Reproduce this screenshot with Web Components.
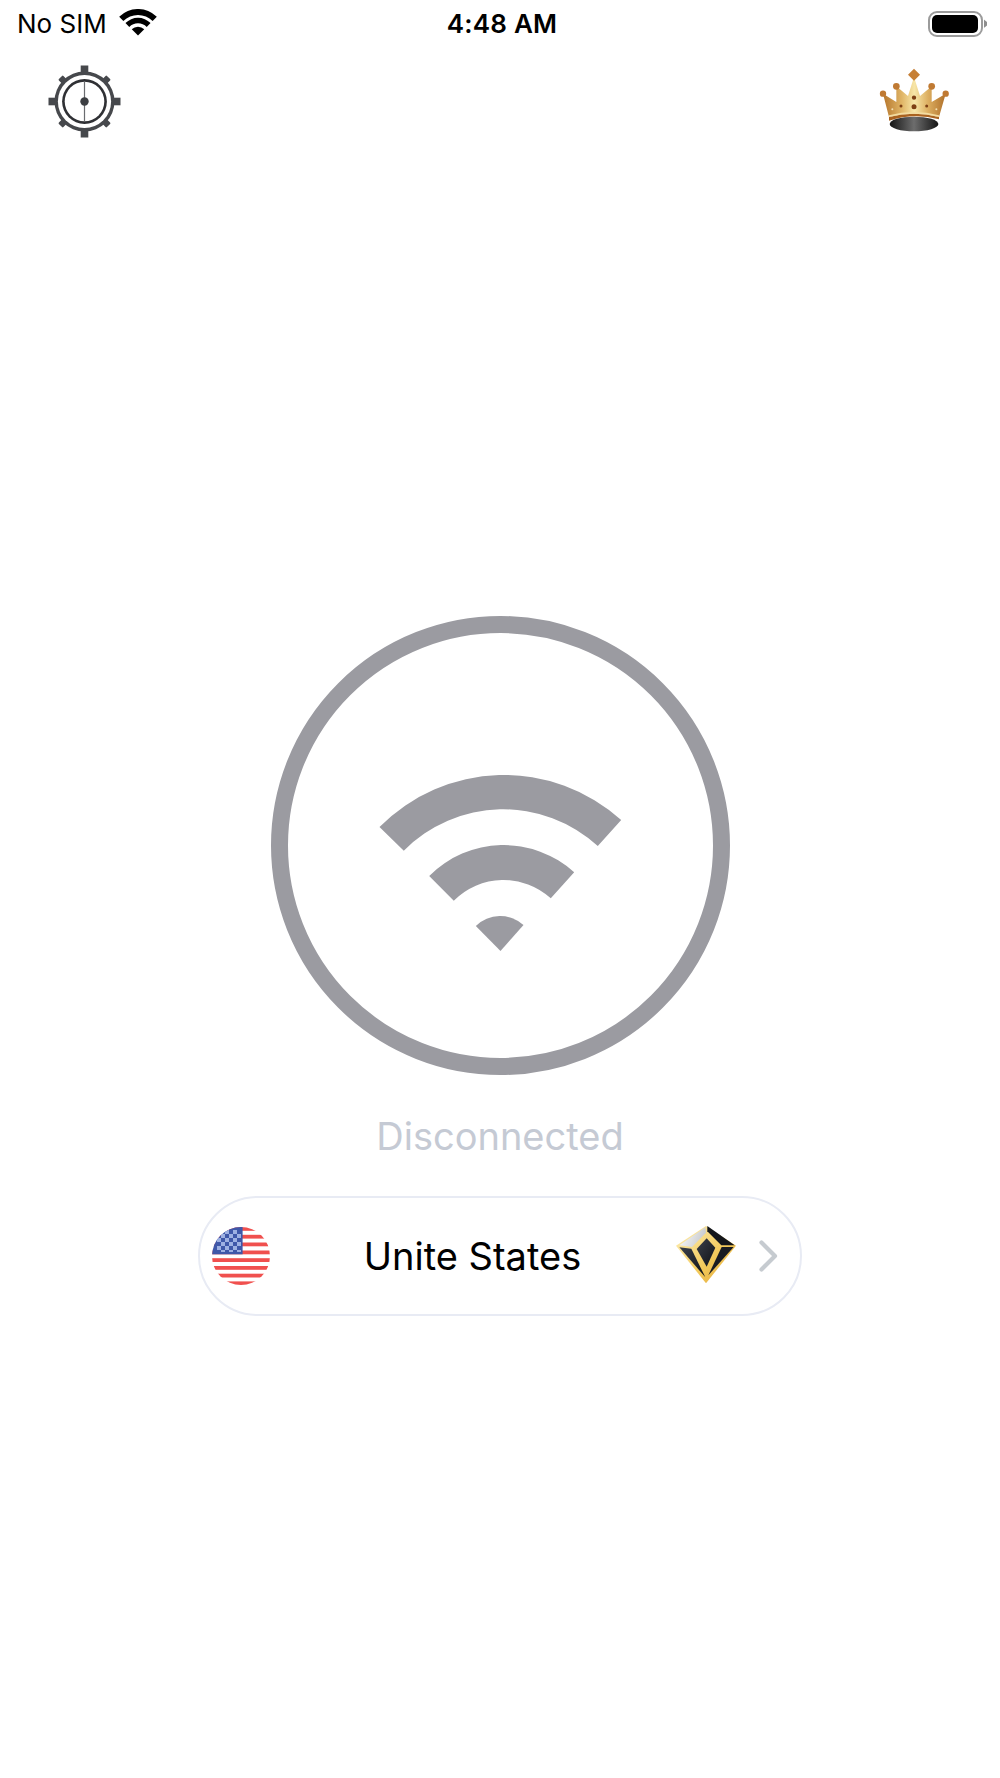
<!DOCTYPE html>
<html>
<head>
<meta charset="utf-8">
<title>VPN</title>
<style>
  html, body { margin: 0; padding: 0; background: #fff; }
  body { font-family: "Inter", "Liberation Sans", sans-serif; }
</style>
</head>
<body>
<vpn-app>
  <status-bar slot="status" carrier="No SIM" time="4:48 AM"></status-bar>
  <top-bar slot="top"></top-bar>
  <connect-button slot="main"></connect-button>
  <status-label slot="main">Disconnected</status-label>
  <server-pill slot="main">Unite States</server-pill>
</vpn-app>

<script>
// page shell: bars on top, the rest stacked and centered
class VpnApp extends HTMLElement {
  constructor() {
    super();
    this.attachShadow({ mode: 'open' });
    this.shadowRoot.innerHTML = `
      <style>
        :host { display: flex; flex-direction: column; width: 1000px; height: 1778px; overflow: hidden; background: #fff; }
        main { display: flex; flex-direction: column; align-items: center; padding-top: 476px; }
      </style>
      <slot name="status"></slot>
      <slot name="top"></slot>
      <main><slot name="main"></slot></main>
    `;
  }
}
customElements.define('vpn-app', VpnApp);

class StatusBar extends HTMLElement {
  constructor() {
    super();
    this.attachShadow({ mode: 'open' });
    this.shadowRoot.innerHTML = `
      <style>
        :host { display: flex; align-items: flex-start; height: 46px; color: #000; font-family: "Inter", "Liberation Sans", sans-serif; font-size: 26px; line-height: 32px; }
        .left, .right { flex: 1; display: flex; }
        .left { padding: 8px 0 0 17px; }
        .right { justify-content: flex-end; padding: 10.5px 13px 0 0; }
        .carrier { letter-spacing: 0; }
        .wifi { display: block; margin: 1px 0 0 12px; }
        .time { padding-top: 8px; font-weight: 600; letter-spacing: 0.2px; }
        .battery { display: flex; align-items: center; }
        .shell { width: 55px; height: 26.5px; box-sizing: border-box; border: 2.5px solid #9b9b9b; border-radius: 9px; padding: 2.5px; }
        .fill { height: 100%; background: #000; border-radius: 5px; }
        .nub { width: 3.5px; height: 9px; margin-left: 1px; background: #8e8e8e; clip-path: polygon(0 0, 100% 30%, 100% 70%, 0 100%); }
      </style>
      <div class="left">
        <span class="carrier">${this.getAttribute('carrier')}</span>
        <svg class="wifi" width="38" height="27" viewBox="-19.2 -27 38.4 27.4">
          <path d="M-19.1 -19.1A27 27 0 0 1 19.1 -19.1L14.85 -14.85A21 21 0 0 0 -14.85 -14.85Z"/>
          <path d="M-12.73 -12.73A18 18 0 0 1 12.73 -12.73L8.84 -8.84A12.5 12.5 0 0 0 -8.84 -8.84Z"/>
          <path d="M-6.36 -6.36A9 9 0 0 1 6.36 -6.36L0 0Z"/>
        </svg>
      </div>
      <span class="time">${this.getAttribute('time')}</span>
      <div class="right">
        <div class="battery">
          <div class="shell"><div class="fill"></div></div>
          <div class="nub"></div>
        </div>
      </div>
    `;
  }
}
customElements.define('status-bar', StatusBar);

class TopBar extends HTMLElement {
  constructor() {
    super();
    this.attachShadow({ mode: 'open' });
    // gear teeth are built below, 8 rects turned around the center
    let teeth = '';
    for (let i = 0; i < 8; i++) {
      const big = i % 2 === 0;
      teeth += big
        ? `<rect x="-3.8" y="-36" width="7.6" height="10" fill="#46484c" transform="rotate(${i * 45})"/>`
        : `<rect x="-3.2" y="-34" width="6.4" height="8" rx="1" fill="#46484c" transform="rotate(${i * 45})"/>`;
    }
    this.shadowRoot.innerHTML = `
      <style>
        :host { display: flex; justify-content: space-between; align-items: flex-start; height: 94px; padding: 18.5px 49px 0 48px; box-sizing: border-box; }
        svg { display: block; }
        .crown { margin-top: 2px; }
      </style>
      <svg class="gear" width="73" height="73" viewBox="-36.5 -36.5 73 73">
        ${teeth}
        <circle r="30" fill="#46484c"/>
        <circle r="26.6" fill="#fff"/>
        <circle r="22.4" fill="#2f3034"/>
        <circle r="19.8" fill="#fff"/>
        <rect x="-0.6" y="-19.8" width="1.2" height="39.6" fill="#6a6c70"/>
        <circle r="4.2" fill="#3c3e42"/>
      </svg>
      <svg class="crown" width="71.7" height="66.7" viewBox="120 195 215 200">
        <defs>
          <linearGradient id="gold" x1="0" x2="1" y1="0" y2="0">
            <stop offset="0" stop-color="#b5752c"/>
            <stop offset="0.3" stop-color="#e0b566"/>
            <stop offset="0.5" stop-color="#f7e6a8"/>
            <stop offset="0.72" stop-color="#dcae60"/>
            <stop offset="1" stop-color="#b0702a"/>
          </linearGradient>
          <linearGradient id="hat" x1="0" x2="1" y1="0" y2="0">
            <stop offset="0" stop-color="#141414"/>
            <stop offset="0.5" stop-color="#6d6d6d"/>
            <stop offset="1" stop-color="#141414"/>
          </linearGradient>
        </defs>
        <ellipse cx="225" cy="366" rx="73" ry="22" fill="url(#hat)"/>
        <path d="M132 275L172 300L172 253L207 282L225 225L243 282L278 253L278 300L320 275L300 345Q225 325 150 345Z" fill="url(#gold)"/>
        <path d="M150 345Q225 325 300 345L300 352Q225 332 150 356Z" fill="#a9621f"/>
        <path d="M150 340Q225 320 300 340L300 345Q225 325 150 345Z" fill="#f3dca0"/>
        <circle cx="132" cy="275" r="9.5" fill="#c07a33"/>
        <circle cx="172" cy="253" r="10" fill="#c07a33"/>
        <circle cx="278" cy="253" r="10" fill="#c07a33"/>
        <circle cx="320" cy="275" r="9.5" fill="#c07a33"/>
        <path d="M225 200L243 218L225 236L207 218Z" fill="#c67f35"/>
        <circle cx="225" cy="287" r="6.5" fill="#7d3f14"/>
        <circle cx="225" cy="314" r="7.5" fill="#7d3f14"/>
        <circle cx="186" cy="312" r="4.5" fill="#7d3f14"/>
        <circle cx="263" cy="312" r="4.5" fill="#7d3f14"/>
        <circle cx="160" cy="322" r="3" fill="#f4e2b4"/>
        <circle cx="292" cy="322" r="3" fill="#f4e2b4"/>
      </svg>
    `;
  }
}
customElements.define('top-bar', TopBar);

// viewBox uses page coordinates, easier to read the wave ends off the screenshot
class ConnectButton extends HTMLElement {
  constructor() {
    super();
    this.attachShadow({ mode: 'open' });
    this.shadowRoot.innerHTML = `
      <style>
        :host { display: block; width: 459px; height: 459px; }
        svg { display: block; }
        path { fill: #9b9ba1; }
      </style>
      <svg width="459" height="459" viewBox="270.5 616 459 459">
        <circle cx="500" cy="845.5" r="221" fill="none" stroke="#9b9ba1" stroke-width="17"/>
        <path d="M379 827A175 175 0 0 1 620.7 820L597.3 846A140 140 0 0 0 403.3 850.7Z"/>
        <path d="M428.7 876A105 105 0 0 1 573.7 872.3L550.3 898.3A70 70 0 0 0 453.3 900.7Z"/>
        <path d="M475.3 926A35 35 0 0 1 523 925L500 951Z"/>
      </svg>
    `;
  }
}
customElements.define('connect-button', ConnectButton);

class StatusLabel extends HTMLElement {
  constructor() {
    super();
    this.attachShadow({ mode: 'open' });
    this.shadowRoot.innerHTML = `
      <style>
        :host { display: block; height: 121px; padding-top: 36px; box-sizing: border-box; color: #c5cad4; font-family: "Inter", "Liberation Sans", sans-serif; font-size: 38px; line-height: 50px; font-weight: 400; text-align: center; }
      </style>
      <slot></slot>
    `;
  }
}
customElements.define('status-label', StatusLabel);

class ServerPill extends HTMLElement {
  constructor() {
    super();
    this.attachShadow({ mode: 'open' });
    this.shadowRoot.innerHTML = `
      <style>
        :host { display: flex; align-items: center; width: 604px; height: 120px; box-sizing: border-box; border: 2.5px solid #e8ebf4; border-radius: 60px; padding: 0 22px 0 12px; background: #fff; color: #000; font-family: "Inter", "Liberation Sans", sans-serif; font-size: 38px; }
        svg { display: block; flex: none; }
        .name { flex: 1; text-align: center; }
        .gem { margin-top: -2px; }
        .chev { margin-left: 22px; }
      </style>
      <svg width="58" height="58" viewBox="0 0 58 58">
        <defs>
          <clipPath id="disc"><circle cx="29" cy="29" r="29"/></clipPath>
          <pattern id="check" width="8" height="8" patternUnits="userSpaceOnUse" x="5" y="3">
            <rect width="4" height="4" fill="#9db0e2"/>
            <rect x="4" y="4" width="4" height="4" fill="#9db0e2"/>
          </pattern>
        </defs>
        <g clip-path="url(#disc)">
          <rect width="58" height="58" fill="#fff"/>
          <g fill="#f0504e">
            <rect y="0" width="58" height="3.8"/>
            <rect y="7.8" width="58" height="3.8"/>
            <rect y="15.5" width="58" height="3.8"/>
            <rect y="23.5" width="58" height="3.8"/>
            <rect y="31.2" width="58" height="3.8"/>
            <rect y="39" width="58" height="3.8"/>
            <rect y="46.7" width="58" height="3.8"/>
            <rect y="54.4" width="58" height="3.8"/>
          </g>
          <rect width="30.6" height="27.3" fill="#3f58a9"/>
          <rect x="5" y="3" width="24" height="22" fill="url(#check)"/>
        </g>
      </svg>
      <span class="name"><slot></slot></span>
      <svg class="gem" width="62" height="59.3" viewBox="27 35 186 178">
        <defs>
          <linearGradient id="rim" x1="0" x2="1" y1="0" y2="1">
            <stop offset="0" stop-color="#fff2bd"/>
            <stop offset="0.6" stop-color="#f2c858"/>
            <stop offset="1" stop-color="#e0a53c"/>
          </linearGradient>
          <linearGradient id="shine" x1="0" x2="1" y1="0" y2="0.3">
            <stop offset="0" stop-color="#ffffff"/>
            <stop offset="1" stop-color="#c9cbce"/>
          </linearGradient>
          <linearGradient id="dark" x1="0" x2="1" y1="0" y2="1">
            <stop offset="0" stop-color="#3a3f4a"/>
            <stop offset="1" stop-color="#101216"/>
          </linearGradient>
        </defs>
        <polygon points="120,38 210,97 120,210 30,97" fill="url(#rim)"/>
        <polygon points="118,42 40,96 78,101 120,58" fill="url(#shine)"/>
        <polygon points="124,38 206,96 166,96 124,54" fill="#14161b"/>
        <polygon points="40,102 76,106 118,192" fill="url(#dark)"/>
        <polygon points="203,101 167,101 127,186" fill="#1a1c22"/>
        <polygon points="122,75 148,103 122,160 92,107" fill="url(#dark)"/>
      </svg>
      <svg class="chev" width="19" height="32" viewBox="0 0 19 32">
        <path d="M2.5 2.5L16 16L2.5 29.5" fill="none" stroke="#c6cbd0" stroke-width="4.2" stroke-linecap="round" stroke-linejoin="round"/>
      </svg>
    `;
  }
}
customElements.define('server-pill', ServerPill);
</script>
</body>
</html>
